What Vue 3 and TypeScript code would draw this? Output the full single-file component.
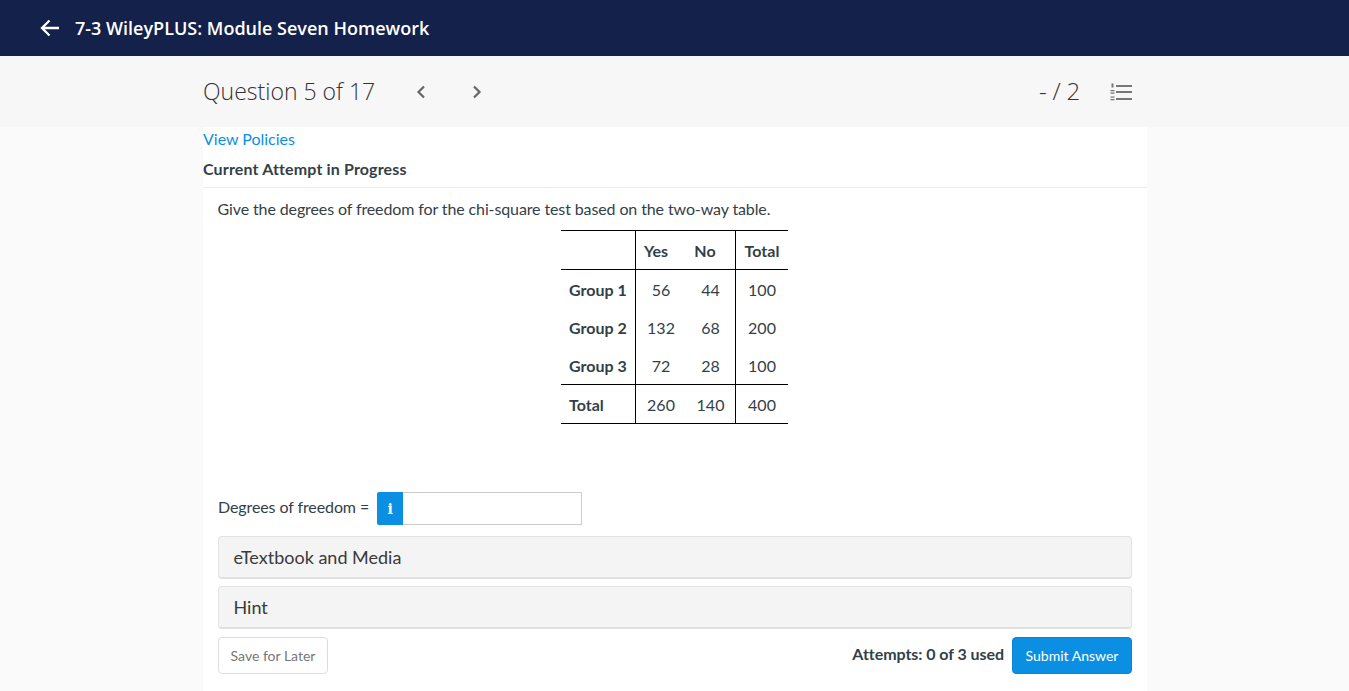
<template>
  <div class="page">
    <header class="top">
      <svg class="back" width="20" height="18" viewBox="0 0 20 18" fill="none" stroke="#fff" stroke-width="2.3"><path d="M19 9H2M9.500 1.500 2 9l7.500 7.500" /></svg>
      <h1>7-3 WileyPLUS: Module Seven Homework</h1>
    </header>
    <div class="qbar">
      <div class="qinner">
        <span class="qtitle">Question 5 of 17</span>
        <button class="nav prev" aria-label="Previous"><svg width="10" height="14" viewBox="0 0 10 14" fill="none" stroke="#666" stroke-width="2.200"><path d="M8 1.500 2.500 7 8 12.500" /></svg></button>
        <button class="nav next" aria-label="Next"><svg width="10" height="14" viewBox="0 0 10 14" fill="none" stroke="#666" stroke-width="2.200"><path d="M2 1.500 7.500 7 2 12.500" /></svg></button>
        <span class="score">- / 2</span>
        <svg class="list" width="22" height="18" viewBox="0 0 22 18" fill="#777"><rect x="6" y="2" width="16" height="2" /><rect x="6" y="8" width="16" height="2" /><rect x="6" y="15" width="16" height="2" /><rect x="1.500" y="0.500" width="2" height="4" /><rect x="0.500" y="7" width="4" height="1.300" /><rect x="0.500" y="9.500" width="4" height="1.300" /><rect x="0.500" y="13.500" width="4" height="1.200" /><rect x="0.500" y="16" width="4" height="1.300" /></svg>
      </div>
    </div>
    <main class="panel">
      <a class="policies">View Policies</a>
      <h2>Current Attempt in Progress</h2>
      <section class="body">
        <p class="prompt">Give the degrees of freedom for the chi-square test based on the two-way table.</p>
        <table>
          <thead>
            <tr><th class="c0"></th><th class="c1">Yes</th><th class="c2">No</th><th class="c3">Total</th></tr>
          </thead>
          <tbody>
            <tr v-for="r in rows" :key="r[0]" :class="{ total: r[0] === 'Total' }">
              <th class="c0">{{ r[0] }}</th><td class="c1">{{ r[1] }}</td><td class="c2">{{ r[2] }}</td><td class="c3">{{ r[3] }}</td>
            </tr>
          </tbody>
        </table>
        <div class="answer">
          <label>Degrees of freedom =</label>
          <span class="info">i</span>
          <input type="text" aria-label="Degrees of freedom" />
        </div>
        <div class="acc">eTextbook and Media</div>
        <div class="acc">Hint</div>
        <div class="actions">
          <button class="save">Save for Later</button>
          <span class="attempts">Attempts: 0 of 3 used</span>
          <button class="submit">Submit Answer</button>
        </div>
      </section>
    </main>
  </div>
</template>

<script setup lang="ts">
const rows: string[][] = [
  ['Group 1', '56', '44', '100'],
  ['Group 2', '132', '68', '200'],
  ['Group 3', '72', '28', '100'],
  ['Total', '260', '140', '400'],
]
</script>

<style>
html, body { margin: 0; background: #fafafa; overflow: hidden; }
</style>

<style scoped>
.page { height: 691px; overflow: hidden; background: #fafafa; font-family: Lato, sans-serif; color: #333f48; }
.top { height: 56px; background: #14214a; display: flex; align-items: center; padding-left: 40px; color: #fff; }
.back { margin-right: 15px; }
.top h1 { margin: 0; font: 600 18px "Open Sans", sans-serif; }
.qbar { height: 71px; background: #f7f7f7; }
.qinner { width: 944px; height: 100%; margin-left: 203px; display: flex; align-items: center; }
.qtitle { font: 300 23px/28px "Open Sans", sans-serif; color: #333; width: 213px; margin-top: -1px; }
.nav { border: 0; background: none; padding: 0; width: 10px; height: 14px; display: flex; }
.prev { margin-right: 46px; }
.score { margin-left: auto; font: 300 24px/28px "Open Sans", sans-serif; color: #333; margin-right: 30px; margin-top: -2px; letter-spacing: -0.2px; }
.list { margin-right: 15px; }
.panel { width: 944px; margin-left: 203px; background: #fff; height: 564px; }
.policies { display: block; color: #0b8fe3; font-size: 16px; line-height: 24px; height: 25px; letter-spacing: -0.02px; }
h2 { margin: 0; height: 36px; box-sizing: border-box; padding-top: 5px; font-size: 16px; line-height: 24px; font-weight: 700; border-bottom: 1px solid #e9ecef; color: #333f48; letter-spacing: 0.15px; }
.body { padding: 0 15px; }
.prompt { margin: 0 0 0 -0.5px; padding-top: 9px; font-size: 16px; line-height: 24px; height: 42px; box-sizing: border-box; letter-spacing: -0.115px; }
table { border-collapse: separate; border-spacing: 0; margin-left: 343px; margin-top: 0; font-size: 16px; width: 227px; table-layout: fixed; }
th, td { padding: 0; height: 38px; box-sizing: border-box; text-align: center; font-weight: 400; }
th { font-weight: 700; }
thead th { height: 40px; border-top: 1px solid #000; border-bottom: 1px solid #000; }
.c0 { width: 75px; border-right: 1px solid #000; }
.c1 { width: 50px; }
.c2 { width: 50px; border-right: 1px solid #000; }
thead .c1 { padding-right: 10px; }
thead .c2 { padding-right: 11px; }
tbody th { text-align: left; padding-left: 8px; }
.total th, .total td { height: 40px; border-top: 1px solid #000; border-bottom: 1px solid #000; }
.answer { margin-top: 68px; height: 33px; display: flex; align-items: center; }
.answer label { font-size: 16px; margin-right: 8px; margin-top: -5px; letter-spacing: -0.1px; }
.info { width: 26px; height: 33px; background: #0b8fe3; color: #fff; border-radius: 2px 0 0 2px; font: 700 14px "DejaVu Serif", serif; display: flex; align-items: center; justify-content: center; }
input { width: 179px; height: 33px; box-sizing: border-box; border: 1px solid #ccc; border-left: 0; padding: 0; outline: 0; background: #fff; }
.acc { height: 43px; box-sizing: border-box; margin-top: 11px; background: #f4f4f4; border: 1px solid #e3e3e3; border-bottom: 2px solid #e0e0e0; border-radius: 4px; padding-left: 14.500px; font-size: 18px; line-height: 41px; color: #3a3a3a; }
.acc + .acc { margin-top: 7px; }
.actions { margin-top: 8px; display: flex; align-items: center; }
.save { width: 110px; height: 37px; background: #fff; border: 1px solid #ddd; border-radius: 4px; color: #777; font: 400 14px Lato, sans-serif; padding: 0; }
.attempts { margin-left: auto; font-size: 16px; font-weight: 700; margin-right: 8px; margin-top: -5px; letter-spacing: -0.05px; }
.submit { width: 120px; height: 37px; background: #0b8fe3; border: 1px solid #0a85d6; border-radius: 4px; color: #fff; font: 400 14px Lato, sans-serif; padding: 0; }
</style>
